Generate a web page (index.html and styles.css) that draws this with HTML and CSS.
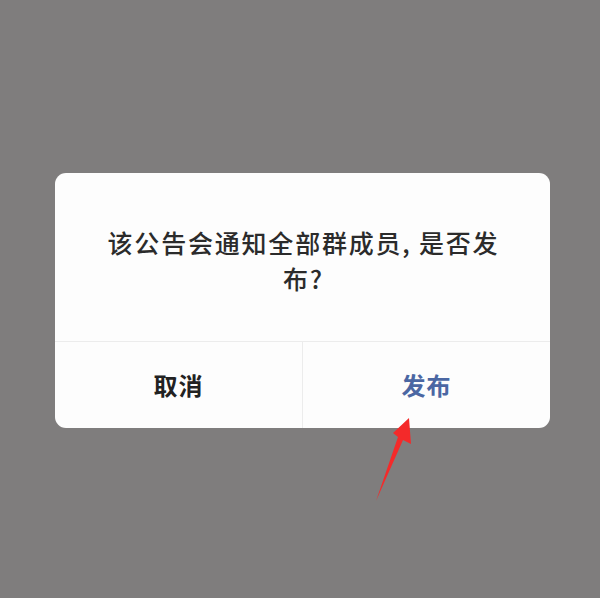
FILE: index.html
```html
<!DOCTYPE html>
<html lang="zh-CN">
<head>
<meta charset="utf-8">
<title>发布公告</title>
<link rel="stylesheet" href="styles.css">
</head>
<body>
<div class="screen">
  <div class="dialog">
    <div class="message">该公告会通知全部群成员, 是否发布?</div>
    <div class="actions">
      <div class="btn cancel">取消</div>
      <div class="btn confirm">发布</div>
    </div>
  </div>
  <svg class="arrow" width="600" height="598" viewBox="0 0 600 598">
    <polygon points="409,418 411,444 403,440 376,501 398,437 393,433" fill="#f42a2a"/>
  </svg>
</div>
</body>
</html>
```

FILE: styles.css
```css
html, body {
  margin: 0;
  padding: 0;
}
body {
  background: #7f7d7d;
  font-family: "Noto Sans CJK SC", "Noto Sans", sans-serif;
}
.screen {
  position: relative;
  width: 600px;
  height: 598px;
  padding-top: 173px;
  box-sizing: border-box;
  overflow: hidden;
}
.dialog {
  margin-left: 55px;
  width: 495px;
  height: 255px;
  background: #fdfdfd;
  border-radius: 11px;
  display: flex;
  flex-direction: column;
  overflow: hidden;
}
.message {
  height: 169px;
  box-sizing: border-box;
  padding: 51px 46px 0 48px;
  font-size: 25px;
  font-weight: 500;
  line-height: 36px;
  letter-spacing: 1.8px;
  color: #2b2b2b;
  text-align: center;
  border-bottom: 1px solid #ececec;
}
.actions {
  flex: 1;
  display: flex;
}
.btn {
  flex: 1;
  display: flex;
  align-items: center;
  justify-content: center;
  font-size: 24px;
  font-weight: 700;
  letter-spacing: 1px;
  padding-bottom: 2px;
}
.cancel {
  color: #222;
  border-right: 1px solid #ececec;
}
.confirm {
  color: #4b67a3;
}
.arrow {
  position: absolute;
  left: 0;
  top: 0;
}
```
